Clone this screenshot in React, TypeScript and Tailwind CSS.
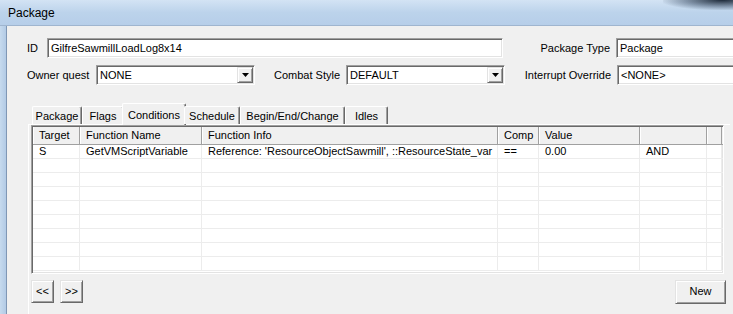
import React from "react";

const sunken =
  "border border-t-[#a0a0a0] border-l-[#a0a0a0] border-b-white border-r-white shadow-[inset_1px_1px_0_#696969,inset_-1px_-1px_0_#e3e3e3]";
const raised =
  "border border-t-[#e3e3e3] border-l-[#e3e3e3] border-b-[#696969] border-r-[#696969] shadow-[inset_1px_1px_0_#ffffff,inset_-1px_-1px_0_#a0a0a0]";

const columns = [
  { label: "Target", w: "w-[47px]" },
  { label: "Function Name", w: "w-[122px]" },
  { label: "Function Info", w: "w-[296px]" },
  { label: "Comp", w: "w-[41px]" },
  { label: "Value", w: "w-[101px]" },
  { label: "", w: "w-[67px]" },
  { label: "", w: "w-[15px]" },
];

const rows = [
  ["S", "GetVMScriptVariable", "Reference: 'ResourceObjectSawmill', ::ResourceState_var", "==", "0.00", "AND", ""],
  ["", "", "", "", "", "", ""],
  ["", "", "", "", "", "", ""],
  ["", "", "", "", "", "", ""],
  ["", "", "", "", "", "", ""],
  ["", "", "", "", "", "", ""],
  ["", "", "", "", "", "", ""],
  ["", "", "", "", "", "", ""],
  ["", "", "", "", "", "", ""],
];

const tabs = [
  { label: "Package", w: "w-[50px]" },
  { label: "Flags", w: "w-[42px]" },
  { label: "Conditions", w: "w-[64px]", active: true },
  { label: "Schedule", w: "w-[56px]" },
  { label: "Begin/End/Change", w: "w-[105px]" },
  { label: "Idles", w: "w-[43px]" },
];

function TextBox({ value, w }: { value: string; w: string }) {
  return (
    <div className={`${w} shrink-0 h-[20px] bg-white ${sunken} flex items-center pl-[3px] overflow-hidden whitespace-nowrap`}>
      {value}
    </div>
  );
}

function Combo({ value }: { value: string }) {
  return (
    <div className={`w-[159px] shrink-0 h-[20px] bg-white ${sunken} flex items-center pl-[3px] pr-[1px]`}>
      <span className="flex-1 whitespace-nowrap">{value}</span>
      <div className={`w-[16px] h-[16px] bg-[#f0f0f0] ${raised} flex items-center justify-center`}>
        <svg width="7" height="4" viewBox="0 0 7 4">
          <path d="M0 0h7L3.5 4z" fill="#000" />
        </svg>
      </div>
    </div>
  );
}

export default function App() {
  return (
    <div className="w-[733px] h-[314px] overflow-hidden flex flex-col bg-[#f0f0f0] text-[11px] text-black font-['Liberation_Sans',Arial,sans-serif] relative">
      {/* Title bar */}
      <div className="h-[26px] shrink-0 bg-gradient-to-b from-[#d3e3f4] via-[#bcd3eb] to-[#b6cee9] border-b border-[#9fb5cf] flex items-center pl-[8px] text-[12px]">
        Package
      </div>
      <div className="absolute right-0 top-0 w-[70px] h-[10px] bg-[radial-gradient(ellipse_at_85%_0%,#1d2a3a_0%,#3b4e6680_45%,transparent_75%)]" />

      <div className="flex flex-1 min-h-0">
        {/* Window frame */}
        <div className="w-[7px] shrink-0 bg-gradient-to-r from-[#c6daee] to-[#b2cae5] border-r border-[#7f97b5]" />

        {/* Dialog body */}
        <div className="flex-1 min-w-0 pt-[12px]">
          <div className="flex items-center h-[20px] whitespace-nowrap">
            <span className="w-[20px] ml-[20px] shrink-0">ID</span>
            <TextBox value="GilfreSawmillLoadLog8x14" w="w-[456px]" />
            <span className="w-[113px] shrink-0 text-right pr-[6px]">Package Type</span>
            <TextBox value="Package" w="w-[130px]" />
          </div>
          <div className="flex items-center h-[20px] mt-[7px] whitespace-nowrap">
            <span className="w-[69px] ml-[20px] shrink-0">Owner quest</span>
            <Combo value="NONE" />
            <span className="w-[72px] ml-[19px] shrink-0">Combat Style</span>
            <Combo value="DEFAULT" />
            <span className="w-[112px] shrink-0 text-right pr-[6px]">Interrupt Override</span>
            <TextBox value="<NONE>" w="w-[130px]" />
          </div>

          {/* Tab control */}
          <div className="ml-[21px] mt-[18px] w-[702px] shrink-0">
            <div className="flex items-end h-[21px] pl-[4px] relative z-10">
              {tabs.map((t) =>
                t.active ? (
                  <div
                    key={t.label}
                    className={`${t.w} shrink-0 -mx-[2px] h-[22px] -mb-[1px] bg-[#f0f0f0] border-t border-l border-white border-r border-r-[#696969] rounded-t-[2px] shadow-[inset_-1px_0_0_#a0a0a0] flex items-start justify-center pt-[3px]`}
                  >
                    {t.label}
                  </div>
                ) : (
                  <div
                    key={t.label}
                    className={`${t.w} shrink-0 h-[18px] bg-[#f0f0f0] border-t border-l border-white border-r border-r-[#696969] rounded-t-[2px] shadow-[inset_-1px_0_0_#a0a0a0] flex items-center justify-center pt-[2px]`}
                  >
                    {t.label}
                  </div>
                )
              )}
            </div>
            <div className="border-t border-l border-white pl-[2px] pb-[12px]">
              {/* List view */}
              <div className={`w-[693px] h-[149px] bg-white ${sunken} overflow-hidden`}>
                <div className="flex h-[18px] bg-[#f0f0f0] ml-[1px] mt-[1px] border-b border-[#a0a0a0]">
                  {columns.map((c, i) => (
                    <div
                      key={i}
                      className={`${c.w} shrink-0 border-r border-[#a0a0a0] shadow-[inset_1px_0_0_#ffffff] flex items-center pl-[6px] whitespace-nowrap`}
                    >
                      {c.label}
                    </div>
                  ))}
                </div>
                {rows.map((r, ri) => (
                  <div key={ri} className="flex h-[14px] ml-[1px] border-b border-[#ececec]">
                    {r.map((cell, ci) => (
                      <div
                        key={ci}
                        className={`${columns[ci].w} shrink-0 border-r border-[#ececec] flex items-center pl-[6px] whitespace-nowrap overflow-hidden`}
                      >
                        {cell}
                      </div>
                    ))}
                  </div>
                ))}
              </div>

              <div className="flex items-center mt-[6px] h-[23px] w-[693px]">
                <button className={`w-[23px] h-[23px] bg-[#f0f0f0] ${raised} flex items-center justify-center text-[11px]`}>
                  &lt;&lt;
                </button>
                <button className={`w-[23px] h-[23px] ml-[6px] bg-[#f0f0f0] ${raised} flex items-center justify-center text-[11px]`}>
                  &gt;&gt;
                </button>
                <button className={`w-[51px] h-[24px] ml-auto -mr-[2px] bg-[#f0f0f0] ${raised} flex items-center justify-center text-[11px]`}>
                  New
                </button>
              </div>
            </div>
          </div>
        </div>
      </div>
    </div>
  );
}
